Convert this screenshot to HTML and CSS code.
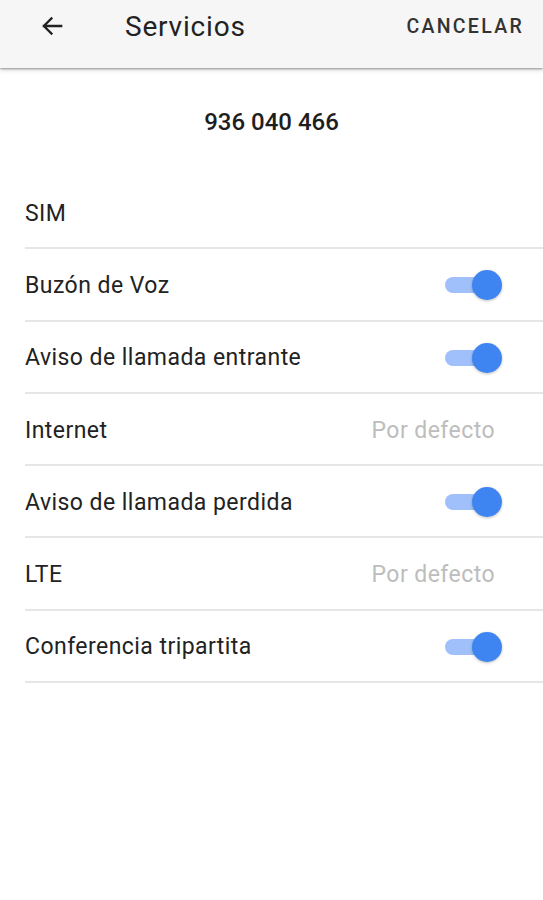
FILE: index.html
```html
<!DOCTYPE html>
<html lang="es">
<head>
<meta charset="utf-8">
<title>Servicios</title>
<link rel="stylesheet" href="styles.css">
</head>
<body>
<header class="appbar">
  <button class="back" aria-label="Atrás">
    <svg width="26" height="26" viewBox="0 0 24 24"><path d="M20.5 12H4.5M11.5 5l-7 7 7 7" fill="none" stroke="#222" stroke-width="2.1" stroke-linecap="square"/></svg>
  </button>
  <h1 class="title">Servicios</h1>
  <span class="cancel">CANCELAR</span>
</header>
<main>
  <div class="phone">936 040 466</div>
  <ul class="list">
    <li class="row"><span class="label">SIM</span></li>
    <li class="row"><span class="label">Buzón de Voz</span><span class="switch on"><span class="thumb"></span></span></li>
    <li class="row"><span class="label">Aviso de llamada entrante</span><span class="switch on"><span class="thumb"></span></span></li>
    <li class="row"><span class="label">Internet</span><span class="value">Por defecto</span></li>
    <li class="row"><span class="label">Aviso de llamada perdida</span><span class="switch on"><span class="thumb"></span></span></li>
    <li class="row"><span class="label">LTE</span><span class="value">Por defecto</span></li>
    <li class="row"><span class="label">Conferencia tripartita</span><span class="switch on"><span class="thumb"></span></span></li>
  </ul>
</main>
</body>
</html>
```

FILE: styles.css
```css
* { box-sizing: border-box; }
html, body { margin: 0; padding: 0; background: #fff; }
body { font-family: Roboto, "Noto Sans", sans-serif; color: #212121; width: 543px; height: 900px; overflow: hidden; }

.appbar {
  height: 68px;
  background: #f6f6f6;
  display: flex;
  align-items: center;
  box-shadow: 0 1px 2px rgba(0,0,0,0.35), 0 2px 5px rgba(0,0,0,0.15);
  position: relative;
  z-index: 1;
  padding-bottom: 16px;
}
.back {
  border: 0; background: none; padding: 0;
  width: 26px; height: 26px;
  margin-left: 39px;
  display: flex;
}
.title {
  margin: 0 0 0 60px;
  font-size: 28px;
  font-weight: 400;
  color: #222;
  flex: 1;
  letter-spacing: 0.8px;
}
.cancel {
  font-size: 19.5px;
  font-weight: 500;
  letter-spacing: 2.3px;
  color: #333;
  margin-right: 19px;
}

.phone {
  text-align: center;
  font-size: 24px;
  font-weight: 500;
  color: #1e1e1e;
  padding-top: 40px;
  height: 109px;
}

.list { list-style: none; margin: 0; padding: 0 0 0 25px; }
.row {
  height: 72.3px;
  display: flex;
  align-items: center;
  justify-content: space-between;
  border-bottom: 2px solid #e6e6e6;
  padding-right: 41px;
  padding-top: 2px;
}
.label { font-size: 23px; letter-spacing: 0.45px; color: #222; }
.value { font-size: 23px; letter-spacing: 0.45px; color: #bdbdbd; margin-right: 7px; }

.switch {
  width: 43px; height: 16px;
  border-radius: 8px;
  background: #9fc0fa;
  position: relative;
  margin-right: 14px;
}
.thumb {
  position: absolute;
  width: 30px; height: 30px;
  border-radius: 50%;
  background: #3f85f2;
  right: -14px; top: -7px;
  box-shadow: 0 1px 3px rgba(0,0,0,0.25);
}
```
